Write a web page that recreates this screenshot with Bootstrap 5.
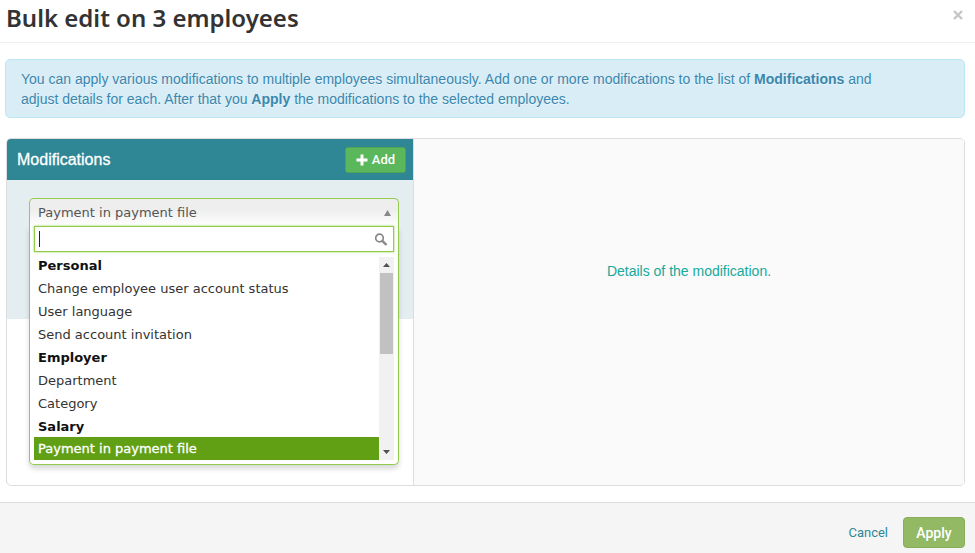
<!DOCTYPE html>
<html lang="en">
<head>
<meta charset="utf-8">
<meta name="viewport" content="width=device-width, initial-scale=1">
<title>Bulk edit on 3 employees</title>
<link href="https://cdn.jsdelivr.net/npm/bootstrap@5.3.0/dist/css/bootstrap.min.css" rel="stylesheet">
<style>
body { font-family: "Liberation Sans", Arial, sans-serif; font-size: 14px; line-height: 20px; background: #fff; }
.dialog-head { height: 43px; padding: 0 10px 6px 6px; border-bottom: 1px solid #eee; }
.dialog-title { font-family: "Trebuchet MS", "Noto Sans", sans-serif; font-weight: 600; font-size: 24px; line-height: 36px; color: #333; }
.close-x { width: 14px; height: 14px; margin-top: -6px; }
.dialog-body { padding: 16px 10px 16px 5px; }
.notice { padding: 9px 60px 8px 15px; margin-bottom: 20px; color: #3a87ad; background: #d9edf7; border-color: #bce8f1; border-radius: 5px; text-shadow: 0 1px 0 rgba(255,255,255,.5); }
.panes { min-height: 348px; margin-left: 1px; border: 1px solid #ddd; border-radius: 5px; }
.pane-left { flex: 0 0 407px; border-right: 1px solid #ddd; }
.pane-right { background: #fafafa; color: #17a99a; padding-top: 122px; border-radius: 0 4px 4px 0; }
.pane-head { height: 41px; padding: 0 7px 0 10px; background: #2f8795; color: #fff; border-radius: 4px 0 0 0; }
.pane-title { font-size: 16px; line-height: 20px; -webkit-text-stroke: .3px #fff; }
.btn-add { width: 61px; height: 26px; font-family: Roboto, sans-serif; font-size: 13px; font-weight: 500; line-height: 20px; color: #fff; background: #5bb75b; border: 1px solid #51a351; border-radius: 3px; }
.btn-add:hover { background: #51a351; color: #fff; }
.pane-band { height: 139px; padding: 18px 14px 0 22px; background: #e4edf0; }
.chooser { font-family: Verdana, "DejaVu Sans", sans-serif; font-size: 13px; }
.chooser-toggle { height: 28px; padding: 0 7px 0 8px; color: #555; border: 1px solid #92cc4b; border-bottom: 0; border-radius: 5px 5px 0 0; background: linear-gradient(#eee 40%, #fff); }
.chooser-drop { top: 100%; left: 0; right: 0; padding: 0 4px 4px; background: #fff; border: 1px solid #92cc4b; border-top: 0; border-radius: 0 0 5px 5px; box-shadow: 0 4px 5px rgba(0,0,0,.15); }
.chooser-search { height: 26px; padding: 0 26px 0 4px; color: #333; border: 1px solid #92cc4b; border-radius: 0; box-shadow: 0 0 2px #92cc4b; caret-color: #222; }
.chooser-search:focus { border-color: #92cc4b; box-shadow: 0 0 2px #92cc4b; }
.glass { right: 6px; top: 7px; }
.caret-mark { left: 5px; top: 5px; width: 1px; height: 16px; background: #222; }
.choices { padding-top: 1px; }
.choices li { height: 23px; line-height: 25px; padding-left: 4px; color: #333; }
.choices .group-name { font-weight: 700; color: #111; }
.choices .picked { line-height: 23px; background: #619f15; color: #fff; -webkit-text-stroke: .3px #fff; }
.rail { width: 15px; margin-top: 5px; background: #f1f1f1; color: #505050; padding: 6px 0; }
.rail-thumb { width: 13px; height: 81px; margin-top: 6px; background: #c1c1c1; }
.dialog-foot { min-height: 51px; padding: 14px 10px 5px; gap: 15px; background: #f5f5f5; border-top: 1px solid #ddd; font-family: Roboto, sans-serif; }
.cancel { font-size: 13px; color: #2f8795; }
.btn-apply { width: 62px; height: 31px; padding: 0; font-size: 14px; font-weight: 500; line-height: 20px; color: #fff; background: #93b964; border: 1px solid #86ad58; border-radius: 4px; }
.btn-apply:hover { background: #86ad58; color: #fff; }
</style>
<script src="https://cdn.jsdelivr.net/npm/bootstrap@5.3.0/dist/js/bootstrap.bundle.min.js"></script>
</head>
<body>
<div class="d-flex flex-column min-vh-100">
  <header class="dialog-head d-flex align-items-center justify-content-between">
    <h1 class="dialog-title m-0">Bulk edit on 3 employees</h1>
    <button type="button" class="close-x btn p-0 border-0 d-flex align-items-center justify-content-center" aria-label="Close">
      <svg width="10" height="10" viewBox="0 0 10 10" fill="none" stroke="#c6c6c6" stroke-width="2.4" aria-hidden="true"><path d="M1 1l8 8M9 1l-8 8"/></svg>
    </button>
  </header>

  <main class="dialog-body flex-grow-1">
    <div class="notice alert" role="note">You can apply various modifications to multiple employees simultaneously. Add one or more modifications to the list of <strong>Modifications</strong> and adjust details for each. After that you <strong>Apply</strong> the modifications to the selected employees.</div>

    <div class="panes d-flex">
      <section class="pane-left">
        <div class="pane-head d-flex align-items-center justify-content-between">
          <h2 class="pane-title m-0">Modifications</h2>
          <button type="button" class="btn-add btn p-0 d-flex align-items-center justify-content-center gap-1">
            <svg width="12" height="12" viewBox="0 0 12 12" fill="#fff" aria-hidden="true"><path d="M4.5 .5h3v4h4v3h-4v4h-3v-4h-4v-3h4z"/></svg>
            <span>Add</span>
          </button>
        </div>
        <div class="pane-band">
          <div class="chooser position-relative">
            <button type="button" class="chooser-toggle w-100 d-flex align-items-center justify-content-between" aria-expanded="true" aria-controls="choices">
              <span>Payment in payment file</span>
              <svg width="7" height="6" viewBox="0 0 7 6" fill="#888" aria-hidden="true"><path d="M3.500 0L7 6H0z"/></svg>
            </button>
            <div class="chooser-drop position-absolute">
              <div class="position-relative">
                <input type="text" class="chooser-search form-control" aria-label="Search modifications" autocomplete="off">
                <span class="caret-mark position-absolute"></span>
                <svg class="glass position-absolute" width="14" height="14" viewBox="0 0 14 14" fill="none" stroke="#888" aria-hidden="true"><circle cx="5.500" cy="5" r="3.800" stroke-width="1.700"/><path d="M8.300 7.800L12.500 12" stroke-width="2.400"/></svg>
              </div>
              <div class="d-flex">
                <ul id="choices" class="choices list-unstyled mb-0 flex-grow-1" role="listbox" aria-label="Modifications">
                  <li class="group-name" role="presentation">Personal</li>
                  <li role="option">Change employee user account status</li>
                  <li role="option">User language</li>
                  <li role="option">Send account invitation</li>
                  <li class="group-name" role="presentation">Employer</li>
                  <li role="option">Department</li>
                  <li role="option">Category</li>
                  <li class="group-name" role="presentation">Salary</li>
                  <li class="picked" role="option" aria-selected="true">Payment in payment file</li>
                </ul>
                <div class="rail d-flex flex-column align-items-center" aria-hidden="true">
                  <svg width="7" height="4" viewBox="0 0 7 4" fill="currentColor"><path d="M3.500 0L7 4H0z"/></svg>
                  <div class="rail-thumb"></div>
                  <svg class="mt-auto" width="7" height="4" viewBox="0 0 7 4" fill="currentColor"><path d="M0 0h7L3.500 4z"/></svg>
                </div>
              </div>
            </div>
          </div>
        </div>
      </section>
      <section class="pane-right flex-grow-1 text-center">Details of the modification.</section>
    </div>
  </main>

  <footer class="dialog-foot d-flex align-items-center justify-content-end">
    <a href="#" class="cancel text-decoration-none">Cancel</a>
    <button type="button" class="btn-apply btn">Apply</button>
  </footer>
</div>
</body>
</html>
